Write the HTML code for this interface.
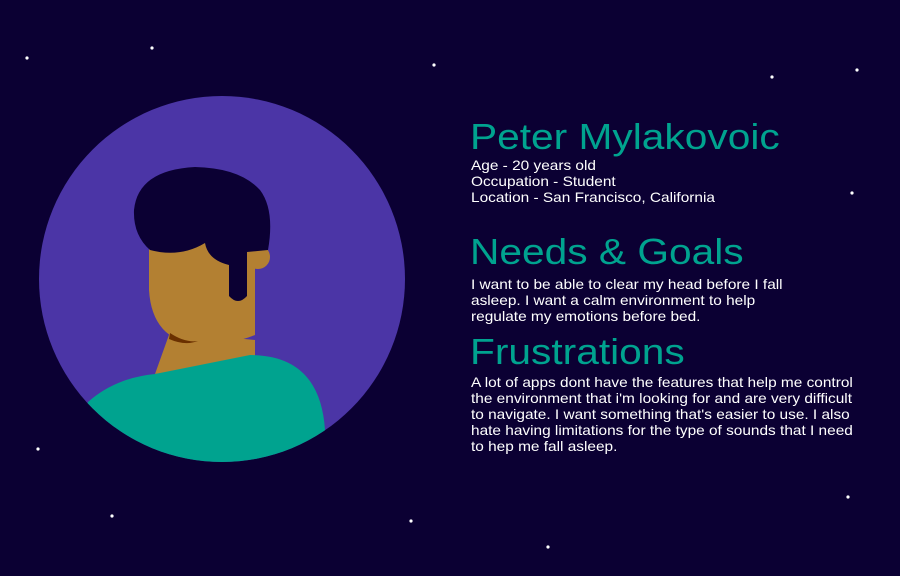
<!DOCTYPE html>
<html><head><meta charset="utf-8"><style>
body{margin:0;width:900px;height:576px;background:#0b0033;overflow:hidden;position:relative;font-family:"Liberation Sans",sans-serif}
svg{position:absolute;left:0;top:0}
.t{position:absolute;left:471px;color:#fff;font-size:14px;line-height:16px;white-space:nowrap;transform:scaleX(1.1);transform-origin:0 0}
.h{position:absolute;left:470px;color:#00a38f;font-size:36px;line-height:40px;white-space:nowrap;transform:scaleX(1.13);transform-origin:0 0}
</style></head><body>
<svg width="900" height="576">
<defs><clipPath id="c"><circle cx="222" cy="279" r="183"/></clipPath></defs>
<g fill="#fff">
<circle cx="152" cy="48" r="1.6"/><circle cx="27" cy="58" r="1.6"/><circle cx="434" cy="65" r="1.6"/><circle cx="772" cy="77" r="1.6"/><circle cx="857" cy="70" r="1.6"/><circle cx="852" cy="193" r="1.6"/><circle cx="38" cy="449" r="1.6"/><circle cx="112" cy="516" r="1.6"/><circle cx="411" cy="521" r="1.6"/><circle cx="848" cy="497" r="1.6"/><circle cx="548" cy="547" r="1.6"/>
</g>
<circle cx="222" cy="279" r="183" fill="#4b35a6"/>
<g clip-path="url(#c)">
<path d="M155 374 L170 332 L255 340 L255 360 Z" fill="#b38032"/>
<path d="M149 240 L149 290 Q152 340 198 345 Q230 345 255 335 L255 240 Z" fill="#b38032"/>
<circle cx="258" cy="257" r="12" fill="#b38032"/>
<path d="M170 333 Q185 343 198 341 Q185 346 169 339 Z" fill="#6a3000"/>
<path d="M150 250 Q133 235 134 210 Q138 170 195 167 Q240 168 260 190 Q275 210 268 250 L247 252 L247 296 Q238 306 229 296 L229 265 Q208 260 205 243 Q180 258 150 250 Z" fill="#0b0033"/>
<path d="M88 402 Q115 378 155 374 L250 355 Q320 355 325 430 L325 480 L60 480 Z" fill="#00a38f"/>
</g>
</svg>
<div class="h" style="top:117px">Peter Mylakovoic</div>
<div class="t" style="top:157px">Age - 20 years old<br>Occupation - Student<br>Location - San Francisco, California</div>
<div class="h" style="top:232px">Needs &amp; Goals</div>
<div class="t" style="top:276px">I want to be able to clear my head before I fall<br>asleep. I want a calm environment to help<br>regulate my emotions before bed.</div>
<div class="h" style="top:332px">Frustrations</div>
<div class="t" style="top:374px">A lot of apps dont have the features that help me control<br>the environment that i'm looking for and are very difficult<br>to navigate. I want something that's easier to use. I also<br>hate having limitations for the type of sounds that I need<br>to hep me fall asleep.</div>
</body></html>
